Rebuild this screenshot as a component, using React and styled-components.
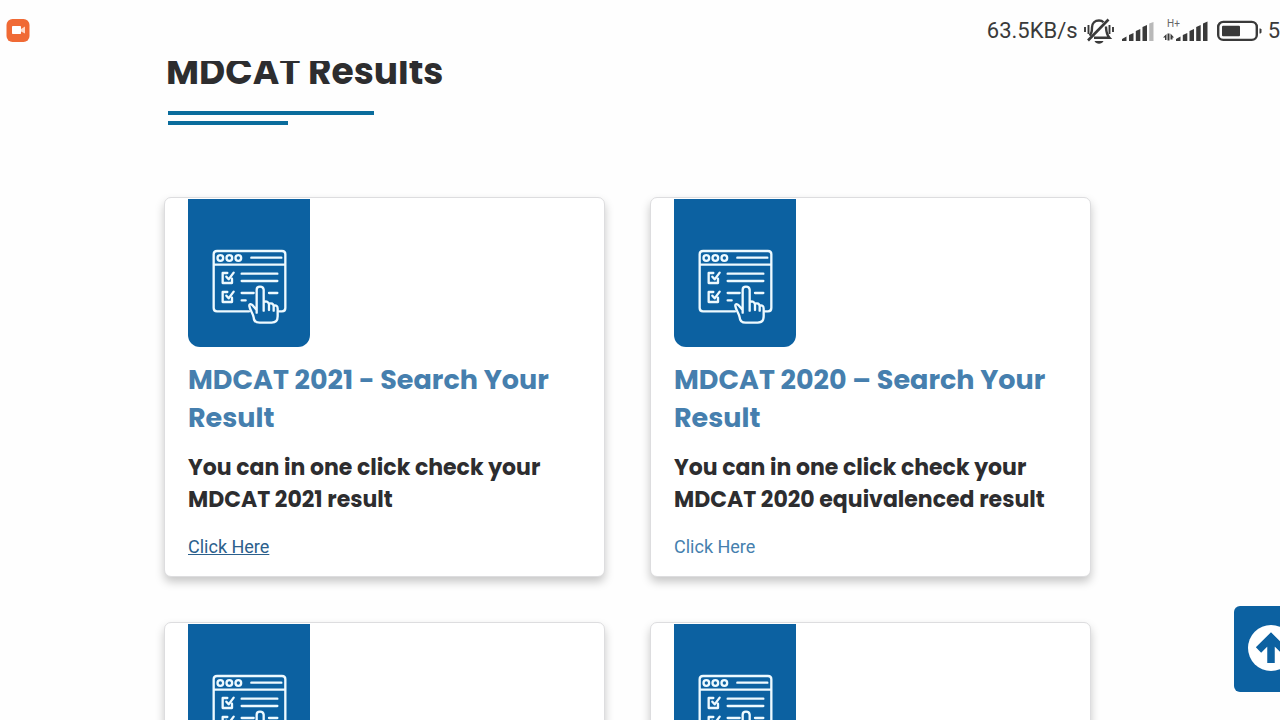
import React from "react";
import styled, { createGlobalStyle } from "styled-components";

const GlobalStyle = createGlobalStyle`
  * { box-sizing: border-box; }
  body {
    margin: 0;
    background: #fefefe;
    color: #2d2d2f;
    font-family: Roboto, "Liberation Sans", sans-serif;
  }
`;

const Page = styled.div`
  display: flex;
  flex-direction: column;
  height: 100vh;
  overflow: hidden;
`;

const StatusBar = styled.header`
  flex: none;
  display: flex;
  align-items: center;
  justify-content: space-between;
  height: 61px;
  padding-left: 6px;
  color: #3a3a3a;
  font-size: 22px;
  line-height: 28px;
`;

const StatusGroup = styled.div`
  display: flex;
  align-items: center;
`;

const Speed = styled.span`
  margin-right: 6px;
`;

const StatusIcon = styled.svg`
  display: block;
  margin-right: ${(p) => p.$gap}px;
`;

const Main = styled.main`
  flex: 1;
  min-height: 0;
  overflow: hidden;
  padding: 0 189px 0 164px;
`;

const Heading = styled.h1`
  margin: 0;
  padding-left: 2px;
  font-family: Poppins, Inter, sans-serif;
  font-size: 36px;
  font-weight: 700;
  line-height: 22px;
`;

const Rule = styled.div`
  width: ${(p) => p.$width}px;
  height: 4px;
  margin: ${(p) => p.$top}px 0 0 4px;
  background: #0a6c9c;
`;

const Grid = styled.div`
  display: grid;
  grid-template-columns: 1fr 1fr;
  gap: 45px;
  margin-top: 72px;
`;

const Card = styled.article`
  min-height: 380px;
  padding: 1px 23px 15px;
  border: 1px solid #dddddf;
  border-radius: 7px;
  background: #fff;
  box-shadow: 0 5px 10px rgba(0, 0, 0, 0.22);
`;

const Badge = styled.div`
  display: flex;
  justify-content: center;
  width: 122px;
  height: 148px;
  padding-top: 50px;
  border-radius: 0 0 12px 12px;
  background: #0c61a1;
`;

const CardTitle = styled.h2`
  margin: 14px 0 0;
  color: #467fae;
  font-family: Poppins, Inter, sans-serif;
  font-size: 27px;
  font-weight: 700;
  line-height: 38px;
`;

const CardText = styled.h3`
  margin: 15px 0 0;
  font-family: Poppins, Inter, sans-serif;
  font-size: 22px;
  font-weight: 700;
  line-height: 32px;
`;

const CardLink = styled.a`
  display: inline-block;
  margin-top: 19px;
  color: ${(p) => (p.$active ? "#2c608c" : "#467fae")};
  font-size: 18px;
  line-height: 24px;
  text-decoration: ${(p) => (p.$active ? "underline" : "none")};
`;

const TopButton = styled.button`
  position: fixed;
  right: 0;
  bottom: 28px;
  display: flex;
  align-items: center;
  width: 46px;
  height: 86px;
  padding: 0 0 2px 14px;
  overflow: hidden;
  border: 0;
  border-radius: 6px 0 0 6px;
  background: #0c61a1;
`;

const ArrowIcon = styled.svg`
  flex: none;
  display: block;
`;

function RecorderIcon() {
  return (
    <svg width="24" height="24" viewBox="0 0 24 24" aria-hidden="true">
      <rect x="0.5" y="0" width="23" height="23" rx="6" fill="#f06a35" />
      <rect x="6" y="7" width="9" height="8" rx="0.8" fill="#fff" />
      <path d="M15 10l4-2.400v7l-4-2.200z" fill="#ffd9c8" />
    </svg>
  );
}

function MutedBell() {
  return (
    <StatusIcon $gap={8} width="30" height="28" viewBox="0 0 30 28" fill="none" stroke="#3a3a3a" strokeWidth="2.400" aria-hidden="true">
      <path d="M5.500 18.500C8 16.500 8 13 8 10.500C8 6 11 3.500 15 3.500C17 3.500 18.500 4.200 19.500 5.300M22 9.500C22.300 14 22 17 25.500 20.800H10" />
      <path d="M4 23.500L24.500 2.500" strokeWidth="2.600" />
      <path d="M10.500 24h9c-1.500 3.500-7.500 3.500-9 0z" fill="#3a3a3a" stroke="none" />
      <path d="M1 10v5M4.500 8v9M25.500 8v9M29 10v5" strokeWidth="1.900" />
    </StatusIcon>
  );
}

function Signal() {
  return (
    <StatusIcon $gap={9} width="32" height="28" viewBox="0 0 32 28" fill="#3a3a3a" aria-hidden="true">
      <path d="M0 24v-2l4.500-2.500v4.500zM7 24v-6l4.500-2v8zM13.800 24v-10l4.500-2v12zM20.500 24v-14l4.500-2v16z" />
      <path d="M27.200 24v-17.500l4.300-1.500v19z" fill="#b9b9b9" />
    </StatusIcon>
  );
}

function DataSignal() {
  return (
    <StatusIcon $gap={9} width="45" height="28" viewBox="0 0 45 28" fill="#3a3a3a" aria-hidden="true">
      <text x="4" y="10" fontFamily="Roboto, sans-serif" fontSize="10" fill="#666">H+</text>
      <path d="M0 20.500l3.500-3.500v6h-1.500v-2.500zM4.500 16.500h2v7h-2zM7.500 16.500l3.500 4h-1.500v2h-2z" />
      <path d="M13 24v-2l4.500-2.500v4.500zM19.800 24v-6l4.500-2v8zM26.500 24v-10l4.500-2v12zM33.200 24v-14l4.500-2v16zM40 24v-17.500l4.500-2v19.500z" />
    </StatusIcon>
  );
}

function Battery() {
  return (
    <StatusIcon $gap={6} width="45" height="28" viewBox="0 0 45 28" aria-hidden="true">
      <rect x="1.200" y="4.900" width="38.600" height="18" rx="5" fill="none" stroke="#3a3a3a" strokeWidth="2.400" />
      <rect x="5" y="8.700" width="18" height="10.500" rx="1" fill="#3a3a3a" />
      <path d="M42.500 11.500h1l1 1v3l-1 1h-1z" fill="#3a3a3a" />
    </StatusIcon>
  );
}

function ChecklistIcon() {
  return (
    <svg width="76" height="76" viewBox="18 27 228 228" fill="none" stroke="#eefaff" strokeWidth="7" strokeLinecap="round" strokeLinejoin="round" aria-hidden="true">
      <path d="M132 214H36q-10 0-10-10V43q0-10 10-10h195q10 0 10 10v161q0 10-10 10h-9" />
      <path d="M26 74H241" strokeLinecap="butt" />
      <circle cx="46" cy="54" r="8.500" />
      <circle cx="73" cy="54" r="8.500" />
      <circle cx="100" cy="54" r="8.500" />
      <path d="M139 53H229M110 101H217M110 123H217M110 159H146M192 159H217M110 181H122" />
      <path d="M67 99H53v30H81V116M64 110l7 8L86 98" />
      <path d="M67 156H53v30H81V173M64 167l7 8L86 155" />
      <path
        d="M155 218V149q0-9 10-9t11 9v63M176 186q13-5 16 7v17M192 191q12-4 14 7v14M206 197q12-3 12 9v23q0 19-18 19H164q-17 0-18-16C145 221 135 212 133 198q-1-9 9-3l13 15"
        fill="#0c61a1"
      />
    </svg>
  );
}

const results = [
  { title: "MDCAT 2021 - Search Your Result", text: "You can in one click check your MDCAT 2021 result", active: true },
  { title: "MDCAT 2020 – Search Your Result", text: "You can in one click check your MDCAT 2020 equivalenced result" },
  {},
  {},
];

export default function App() {
  return (
    <Page>
      <GlobalStyle />
      <StatusBar>
        <RecorderIcon />
        <StatusGroup>
          <Speed>63.5KB/s</Speed>
          <MutedBell />
          <Signal />
          <DataSignal />
          <Battery />
          <span>5</span>
        </StatusGroup>
      </StatusBar>
      <Main>
        <Heading>MDCAT Results</Heading>
        <Rule $width={206} $top={28} />
        <Rule $width={120} $top={6} />
        <Grid>
          {results.map((item, i) => (
            <Card key={i}>
              <Badge>
                <ChecklistIcon />
              </Badge>
              {item.title && (
                <>
                  <CardTitle>{item.title}</CardTitle>
                  <CardText>{item.text}</CardText>
                  <CardLink href="#result" $active={item.active}>Click Here</CardLink>
                </>
              )}
            </Card>
          ))}
        </Grid>
      </Main>
      <TopButton type="button" aria-label="Back to top">
        <ArrowIcon width="46" height="46" viewBox="0 0 46 46" aria-hidden="true">
          <circle cx="23" cy="23" r="23" fill="#fff" />
          <path d="M23 38V12M10.500 25L23 12.500L35.500 25" fill="none" stroke="#0c61a1" strokeWidth="7.500" />
        </ArrowIcon>
      </TopButton>
    </Page>
  );
}
